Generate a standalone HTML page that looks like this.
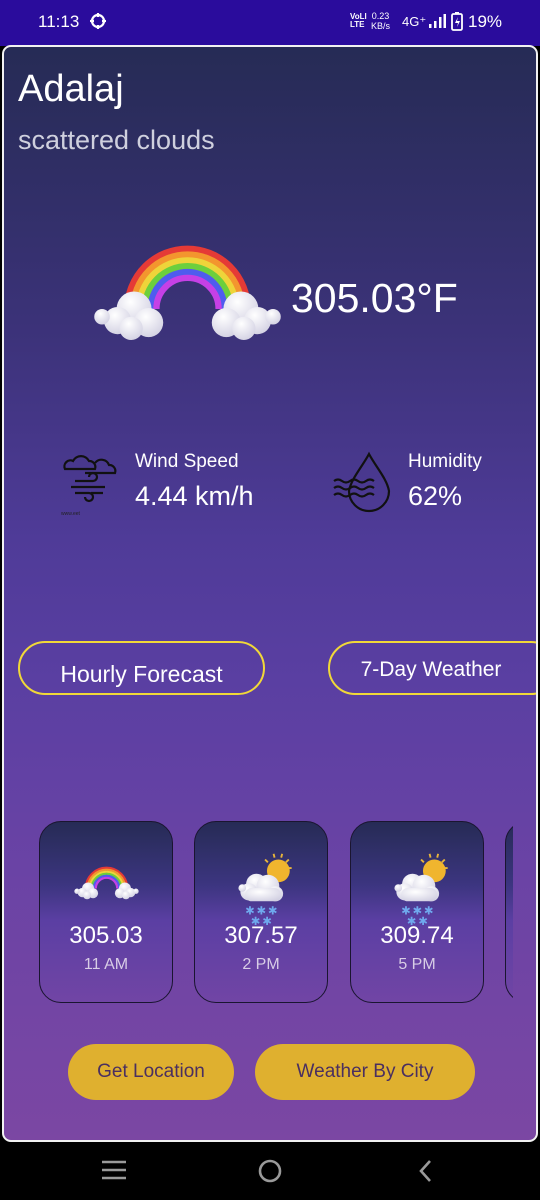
<!DOCTYPE html>
<html><head><meta charset="utf-8">
<style>
*{margin:0;padding:0;box-sizing:border-box}
body{width:540px;height:1200px;background:#000;font-family:"Liberation Sans",sans-serif;position:relative;overflow:hidden;color:#fff}
.status{position:absolute;left:0;top:0;width:540px;height:46px;background:#2a0c9c}
.frame{position:absolute;left:2px;top:45px;width:536px;height:1097px;border:2px solid #f2f2f2;border-radius:9px;overflow:hidden;
background:linear-gradient(180deg,#262b55 0%,#3b3278 25%,#4f3b98 45%,#5a3fa2 58%,#6a43a5 75%,#7b47a3 100%)}
.abs{position:absolute}
.card{position:absolute;top:774px;width:134px;height:182px;border:1.5px solid #1a1530;border-radius:22px;
background:linear-gradient(180deg,#262b55 0%,#3c3580 35%,#5b3fa3 55%,#7145a5 100%)}
.card .t{position:absolute;top:100px;width:100%;text-align:center;font-size:24px}
.card .h{position:absolute;top:134px;width:100%;text-align:center;font-size:16px;color:#d8cde6}
.obtn{position:absolute;top:594px;height:54px;border:2px solid #f1d838;border-radius:27px;font-size:22px;text-align:center;line-height:56px;overflow:hidden}
.ybtn{position:absolute;top:997px;height:56px;background:#dfb02f;border-radius:28px;color:#4a2f60;font-size:19px;text-align:center;line-height:56px}
</style></head><body>
<div class="status">
  <div class="abs" style="left:38px;top:12px;font-size:17px">11:13</div>
  <svg class="abs" style="left:89px;top:12px" width="18" height="18" viewBox="0 0 18 18"><circle cx="9" cy="9" r="6" fill="none" stroke="#fff" stroke-width="2.2"/><path d="M9 1v4M9 13v4M1 9h4M13 9h4" stroke="#fff" stroke-width="2.2"/></svg>
  <div class="abs" style="left:350px;top:13px;font-size:8px;line-height:8px;font-weight:bold">VoLl<br>LTE</div>
  <div class="abs" style="left:371px;top:11px;font-size:9px;line-height:10px;text-align:center">0.23<br>KB/s</div>
  <div class="abs" style="left:402px;top:14px;font-size:13px">4G⁺</div>
  <svg class="abs" style="left:428px;top:13px" width="18" height="16"><rect x="1" y="11" width="2.5" height="4" fill="#fff"/><rect x="6" y="8" width="2.5" height="7" fill="#fff"/><rect x="11" y="4" width="2.5" height="11" fill="#fff"/><rect x="15.5" y="1" width="2.5" height="14" fill="#fff"/></svg>
  <svg class="abs" style="left:451px;top:12px" width="12" height="19"><rect x="1" y="2" width="10" height="16" rx="1.5" fill="none" stroke="#fff" stroke-width="1.8"/><rect x="4" y="0" width="4" height="2" fill="#fff"/><path d="M7 5L4 11h3l-1 4 3-6H6z" fill="#fff"/></svg>
  <div class="abs" style="left:468px;top:12px;font-size:17px">19%</div>
</div>
<div class="frame">
  <div class="abs" style="left:14px;top:21px;font-size:38px">Adalaj</div>
  <div class="abs" style="left:14px;top:78px;font-size:27px;color:#cfd0de">scattered clouds</div>

  <svg width="0" height="0" style="position:absolute">
    <defs>
      <radialGradient id="cg" cx="0.4" cy="0.3" r="0.8"><stop offset="0" stop-color="#ffffff"/><stop offset="1" stop-color="#cfcde0"/></radialGradient>
      <symbol id="rb" viewBox="0 0 200 105">
        <g fill="none" stroke-width="6.5">
          <path d="M38 72A62 62 0 0 1 162 72" stroke="#e53a36"/>
          <path d="M44 72A56 56 0 0 1 156 72" stroke="#f3962e"/>
          <path d="M50 72A50 50 0 0 1 150 72" stroke="#eed43a"/>
          <path d="M56 72A44 44 0 0 1 144 72" stroke="#6ccf3d"/>
          <path d="M62 72A38 38 0 0 1 138 72" stroke="#4f5cee"/>
          <path d="M68 72A32 32 0 0 1 132 72" stroke="#c540e6"/>
        </g>
        <g fill="url(#cg)">
          <circle cx="45" cy="72" r="18"/><circle cx="28" cy="84" r="14"/><circle cx="60" cy="86" r="15"/><circle cx="12" cy="80" r="8"/><circle cx="42" cy="92" r="12"/>
          <circle cx="155" cy="72" r="18"/><circle cx="140" cy="86" r="15"/><circle cx="172" cy="84" r="14"/><circle cx="188" cy="80" r="8"/><circle cx="158" cy="92" r="12"/>
        </g>
      </symbol>
      <symbol id="sc" viewBox="0 0 60 80">
        <g stroke="#e8b53a" stroke-width="2"><path d="M38 4l1 4M47 4l-1 4M54 10l-3 3M57 19h-4M29 10l3 3"/></g>
        <circle cx="43" cy="22" r="12" fill="#f0b52e"/>
        <g fill="url(#cg)"><circle cx="20" cy="36" r="11"/><circle cx="32" cy="38" r="12"/><circle cx="12" cy="44" r="9"/><circle cx="40" cy="46" r="8"/><rect x="8" y="40" width="38" height="14" rx="7"/><circle cx="5" cy="40" r="4"/></g>
        <g fill="#6fa9ee" font-size="12" font-family="DejaVu Sans"><text x="8" y="68">✱</text><text x="20" y="68">✱</text><text x="32" y="68">✱</text><text x="14" y="79">✱</text><text x="26" y="79">✱</text></g>
      </symbol>
    </defs>
  </svg>

  <svg class="abs" style="left:86px;top:192px" width="195" height="102"><use href="#rb"/></svg>
  <div class="abs" style="left:287px;top:228px;font-size:41px">305.03°F</div>

  <svg class="abs" style="left:57px;top:402px" width="62" height="70" viewBox="0 0 62 70" fill="none" stroke="#111" stroke-width="2.2">
    <path d="M4 20h30a6 6 0 0 0-6-8a9 9 0 0 0-16 0a6 6 0 0 0-8 8z"/>
    <path d="M24 24h30a6 6 0 0 0-6-8a8 8 0 0 0-14-2"/>
    <path d="M14 32h18a4 4 0 1 0-4-4M10 38h34M14 44h14a4 4 0 1 1-4 4M30 44h12"/>
    <text x="0" y="66" font-size="5" fill="#222" stroke="none">www.eet</text>
  </svg>
  <div class="abs" style="left:131px;top:404px;font-size:19px">Wind Speed</div>
  <div class="abs" style="left:131px;top:434px;font-size:27px">4.44 km/h</div>

  <svg class="abs" style="left:328px;top:404px" width="68" height="66" viewBox="0 0 68 66" fill="none" stroke="#111" stroke-width="2.2">
    <path d="M37 3C30 16 19 28 17 40a20 20 0 0 0 40 0C55 28 44 16 37 3z"/>
    <path d="M2 30q4-3 8 0t8 0t8 0t8 0t8 0M2 37q4-3 8 0t8 0t8 0t8 0t8 0M2 44q4-3 8 0t8 0t8 0t8 0t8 0"/>
  </svg>
  <div class="abs" style="left:404px;top:404px;font-size:19px">Humidity</div>
  <div class="abs" style="left:404px;top:434px;font-size:27px">62%</div>

  <div class="obtn" style="left:14px;width:247px"><span style="position:relative;top:3px;font-size:23px">Hourly Forecast</span></div>
  <div class="obtn" style="left:324px;width:230px;padding-right:24px;font-size:21px;line-height:54px">7-Day Weather</div>

  <div class="card" style="left:35px"><svg class="abs" style="left:33px;top:42px" width="67" height="36"><use href="#rb"/></svg><div class="t">305.03</div><div class="h">11 AM</div></div>
  <div class="card" style="left:190px"><svg class="abs" style="left:42px;top:28px" width="58" height="76"><use href="#sc"/></svg><div class="t">307.57</div><div class="h">2 PM</div></div>
  <div class="card" style="left:346px"><svg class="abs" style="left:42px;top:28px" width="58" height="76"><use href="#sc"/></svg><div class="t">309.74</div><div class="h">5 PM</div></div>
  <div class="abs" style="left:501px;top:774px;width:8px;height:182px;overflow:hidden"><div class="card" style="left:0;top:0"></div></div>

  <div class="ybtn" style="left:64px;width:166px">Get Location</div>
  <div class="ybtn" style="left:251px;width:220px">Weather By City</div>
</div>
<svg class="abs" style="left:0;top:1143px" width="540" height="57">
  <g stroke="#9a9a9a" stroke-width="2.6" fill="none">
    <path d="M102 19h24M102 27h24M102 35h24"/>
    <circle cx="270" cy="28" r="10"/>
    <path d="M430 18l-9 10 9 10"/>
  </g>
</svg>
</body></html>
